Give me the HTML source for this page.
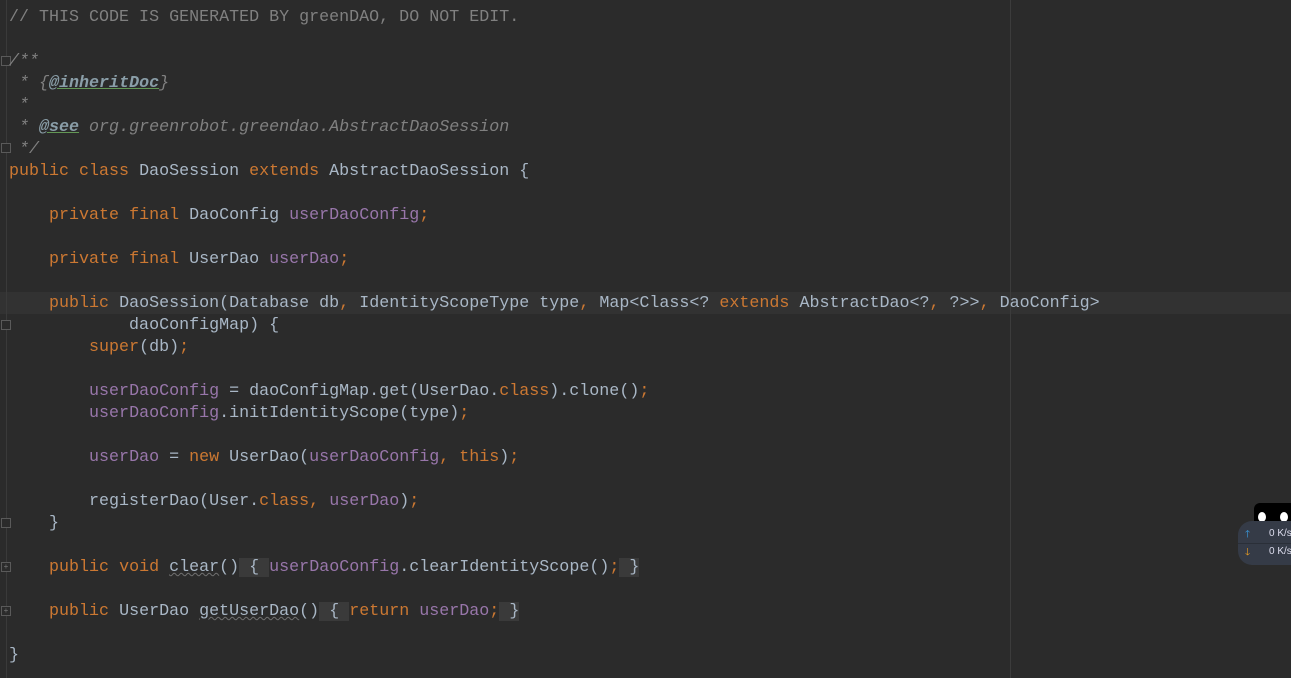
<!DOCTYPE html>
<html><head><style>
body{margin:0;width:1291px;height:678px;background:#2b2b2b;overflow:hidden;position:relative;font-family:"Liberation Mono",monospace;}
.code{position:absolute;left:9px;top:7px;font-size:16.68px;line-height:22px;color:#a9b7c6;white-space:pre;}
.k{color:#cc7832}.f{color:#9876aa}.c{color:#808080}.d{color:#808080;font-style:italic}
.t{color:#8a9ea8;font-weight:bold;text-decoration:underline;text-decoration-color:#629755}
.w{text-decoration:underline wavy #707070;text-decoration-thickness:1px}
.fold{background:#3a3a3a}
.hl{position:absolute;left:0;top:292px;width:1291px;height:22px;background:#323232}
.margin{position:absolute;left:1010px;top:0;width:1px;height:678px;background:#3c3c3c}
.gut{position:absolute;left:6px;top:0;width:1px;height:678px;background:#3a3a3a}
.fm{position:absolute;left:1px;width:8px;height:8px;border:1px solid #5a5a5a;background:#2b2b2b;font-size:8px;line-height:8px;color:#777;text-align:center;font-family:"Liberation Sans",sans-serif}
.w2{position:absolute;left:1238px;top:521px;width:70px;height:44px;border-radius:14px;background:#353b47;font-family:"Liberation Sans",sans-serif;font-size:10px;color:#dde}
</style></head><body>
<div class="hl"></div>
<div class="margin"></div>
<div class="gut"></div>
<div class="fm" style="top:56px"></div>
<div class="fm" style="top:143px"></div>
<div class="fm" style="top:320px"></div>
<div class="fm" style="top:518px"></div>
<div class="fm" style="top:562px">+</div>
<div class="fm" style="top:606px">+</div>
<div class="code"><span class="c">// THIS CODE IS GENERATED BY greenDAO, DO NOT EDIT.</span>

<span class="d">/**</span>
<span class="d"> * {<span class="t">@inheritDoc</span>}</span>
<span class="d"> *</span>
<span class="d"> * <span class="t">@see</span> org.greenrobot.greendao.AbstractDaoSession</span>
<span class="d"> */</span>
<span class="k">public class</span> DaoSession <span class="k">extends</span> AbstractDaoSession {

    <span class="k">private final</span> DaoConfig <span class="f">userDaoConfig</span><span class="k">;</span>

    <span class="k">private final</span> UserDao <span class="f">userDao</span><span class="k">;</span>

    <span class="k">public</span> DaoSession(Database db<span class="k">,</span> IdentityScopeType type<span class="k">,</span> Map&lt;Class&lt;? <span class="k">extends</span> AbstractDao&lt;?<span class="k">,</span> ?&gt;&gt;<span class="k">,</span> DaoConfig&gt;
            daoConfigMap) {
        <span class="k">super</span>(db)<span class="k">;</span>

        <span class="f">userDaoConfig</span> = daoConfigMap.get(UserDao.<span class="k">class</span>).clone()<span class="k">;</span>
        <span class="f">userDaoConfig</span>.initIdentityScope(type)<span class="k">;</span>

        <span class="f">userDao</span> = <span class="k">new</span> UserDao(<span class="f">userDaoConfig</span><span class="k">, this</span>)<span class="k">;</span>

        registerDao(User.<span class="k">class</span><span class="k">,</span> <span class="f">userDao</span>)<span class="k">;</span>
    }

    <span class="k">public void</span> <span class="w">clear</span>()<span class="fold"> { </span><span class="f">userDaoConfig</span>.clearIdentityScope()<span class="k">;</span><span class="fold"> }</span>

    <span class="k">public</span> UserDao <span class="w">getUserDao</span>()<span class="fold"> { </span><span class="k">return</span> <span class="f">userDao</span><span class="k">;</span><span class="fold"> }</span>

}</div>
<div style="position:absolute;left:1254px;top:503px;width:40px;height:22px;background:#000;border-radius:6px 0 0 0"></div>
<div style="position:absolute;left:1258px;top:512px;width:8px;height:10px;background:#fff;border-radius:50%"></div>
<div style="position:absolute;left:1280px;top:512px;width:8px;height:10px;background:#fff;border-radius:50%"></div>
<div class="w2"><div style="position:absolute;left:7px;top:6px;color:#3aa0e8">🡑</div><div style="position:absolute;left:31px;top:7px">0 K/s</div><div style="position:absolute;left:0;top:22px;width:70px;height:1px;background:#2a2f38"></div><div style="position:absolute;left:7px;top:24px;color:#f0a020">🡓</div><div style="position:absolute;left:31px;top:25px">0 K/s</div></div>
</body></html>
